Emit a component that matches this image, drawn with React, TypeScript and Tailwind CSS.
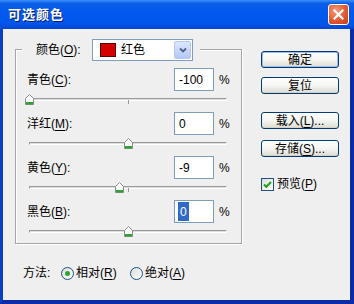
import React from "react";

const FONT = '"Liberation Sans","Noto Sans CJK SC",sans-serif';

function Acc({ k }: { k: string }) {
  return (
    <>
      (<span className="underline underline-offset-[2px]">{k}</span>)
    </>
  );
}

function Slider({ value, last }: { value: number; last?: boolean }) {
  const c = ((value + 100) / 200) * 198;
  return (
    <div className={`relative ml-[2px] w-[198px] pt-[7px] ${last ? "h-[20px]" : "h-[21px]"}`}>
      <div className="h-[3px] border-t border-t-[#9a9a9a] border-l border-l-[#9a9a9a] border-b border-b-white border-r border-r-white bg-[#dedede]" />
      <div className="absolute left-[99px] top-[9px] h-[4px] w-px bg-[#9a9a9a]" />
      <svg
        className="absolute top-[3px]"
        style={{ left: c - 4.5 }}
        width="9"
        height="11"
        viewBox="0 0 9 11"
      >
        <path d="M4.5 0.5 L8.5 4.5 L8.5 10.5 L0.5 10.5 L0.5 4.5 Z" fill="#fcfcfc" stroke="#8c8c8c" />
        <rect x="1" y="8" width="7" height="2.5" fill="#2fa33a" />
      </svg>
    </div>
  );
}

function Row({ label, k, value, selected, last }: { label: string; k: string; value: number; selected?: boolean; last?: boolean }) {
  return (
    <div>
      <div className="flex h-[23px] items-center">
        <div className="w-[147px] shrink-0">
          {label}
          <Acc k={k} />:
        </div>
        <div className="flex h-[23px] w-[40px] items-center border border-[#7f9db9] bg-white pl-[3px]">
          {selected ? (
            <span className="flex h-[19px] items-center bg-[#316ac5] px-[2px] text-white">{value}</span>
          ) : (
            <span className="pl-[1px]">{value}</span>
          )}
        </div>
        <div className="ml-[5px]">%</div>
      </div>
      <Slider value={value} last={last} />
    </div>
  );
}

function XPButton({ children, def }: { children: React.ReactNode; def?: boolean }) {
  return (
    <div
      className={`flex h-[17px] w-[78px] items-center justify-center rounded-[3px] border border-[#003c74] bg-gradient-to-b from-white via-[#f5f5f2] to-[#dcdcd4] leading-none ${
        def ? "shadow-[inset_0_0_0_1px_#9dbdf0]" : "shadow-[inset_0_-1px_0_#d6d0c5]"
      }`}
    >
      {children}
    </div>
  );
}

function Radio({ on }: { on?: boolean }) {
  return (
    <svg width="13" height="13" viewBox="0 0 13 13">
      <defs>
        <linearGradient id="rg" x1="0" y1="0" x2="1" y2="1">
          <stop offset="0" stopColor="#dcdcd6" />
          <stop offset="1" stopColor="#ffffff" />
        </linearGradient>
      </defs>
      <circle cx="6.5" cy="6.5" r="6" fill="url(#rg)" stroke="#1c5180" />
      {on && <circle cx="6.5" cy="6.5" r="2.5" fill="#2fa33a" />}
    </svg>
  );
}

export default function App() {
  return (
    <div
      className="flex h-[304px] w-[354px] flex-col overflow-hidden text-[12px] text-black"
      style={{ fontFamily: FONT }}
    >
      {/* title bar */}
      <div className="flex h-[29px] shrink-0 items-center justify-between bg-[linear-gradient(to_bottom,#3d8ffb_0%,#0a5fe6_12%,#0058ee_45%,#0056ea_80%,#0046d4_100%)] pl-[8px] pr-[5px]">
        <div className="text-[13px] font-bold tracking-[1px] text-white [text-shadow:1px_1px_0_#0a1e6e]">
          可选颜色
        </div>
        <div className="flex h-[21px] w-[21px] items-center justify-center rounded-[3px] border border-white bg-[radial-gradient(circle_at_35%_30%,#f39a7a,#e1552b_60%,#c23f1b)]">
          <svg width="11" height="11" viewBox="0 0 11 11">
            <path d="M1.5 1.5 L9.5 9.5 M9.5 1.5 L1.5 9.5" stroke="#fff" strokeWidth="2.2" strokeLinecap="square" />
          </svg>
        </div>
      </div>

      {/* body */}
      <div className="flex flex-1 border-b-[4px] border-l-[3px] border-r-[4px] border-b-[#0c2ba6] border-l-[#0a3fc2] border-r-[#0c2ba6] bg-[#efefef]">
        {/* left column */}
        <div className="w-[239px] shrink-0 pl-[12px] pt-[10px]">
          {/* legend row */}
          <div className="flex h-[22px] w-[227px]">
            <div className="h-[12px] w-[7px] self-end border-l border-t border-[#a5a5a5] shadow-[inset_1px_1px_0_#ffffff]" />
            <div className="ml-[14px] flex w-[56px] items-center">
              颜色
              <Acc k="O" />:
            </div>
            <div className="flex h-[22px] w-[101px] items-center border border-[#7f9db9] bg-white pl-[7px] pr-[1px]">
              <div className="h-[14px] w-[16px] border border-[#5a0000] bg-[#d40000]" />
              <div className="ml-[5px] flex-1">红色</div>
              <div className="flex h-[18px] w-[17px] items-center justify-center rounded-[2px] border border-[#b4c8f6] bg-gradient-to-b from-[#dce7fd] to-[#b3c8f6]">
                <svg width="8" height="6" viewBox="0 0 8 6">
                  <path d="M1 1.5 L4 4.5 L7 1.5" fill="none" stroke="#4d6185" strokeWidth="1.8" />
                </svg>
              </div>
            </div>
            <div className="ml-[7px] h-[12px] flex-1 self-end border-r border-t border-[#a5a5a5] shadow-[inset_0_1px_0_#ffffff,1px_0_0_#ffffff]" />
          </div>
          {/* group box body */}
          <div className="w-[227px] border-b border-l border-r border-[#a5a5a5] pl-[11px] pt-[7px] shadow-[inset_1px_0_0_#ffffff,1px_1px_0_#ffffff]">
            <Row label="青色" k="C" value={-100} />
            <Row label="洋红" k="M" value={0} />
            <Row label="黄色" k="Y" value={-9} />
            <Row label="黑色" k="B" value={0} selected last />
          </div>
          {/* method row */}
          <div className="ml-[8px] mt-[18px] flex h-[22px] items-center">
            <div className="w-[38px]">方法:</div>
            <Radio on />
            <div className="ml-[2px] w-[54px]">
              相对<Acc k="R" />
            </div>
            <Radio />
            <div className="ml-[2px]">
              绝对<Acc k="A" />
            </div>
          </div>
        </div>

        {/* right column */}
        <div className="flex flex-col pl-[19px] pt-[22px]">
          <XPButton def>确定</XPButton>
          <div className="mt-[9px]">
            <XPButton>复位</XPButton>
          </div>
          <div className="mt-[18px]">
            <XPButton>
              载入<Acc k="L" />...
            </XPButton>
          </div>
          <div className="mt-[11px]">
            <XPButton>
              存储<Acc k="S" />...
            </XPButton>
          </div>
          <div className="mt-[18px] flex items-center">
            <svg width="13" height="13" viewBox="0 0 13 13">
              <defs>
                <linearGradient id="cg" x1="0" y1="0" x2="1" y2="1">
                  <stop offset="0" stopColor="#dcdcd6" />
                  <stop offset="1" stopColor="#ffffff" />
                </linearGradient>
              </defs>
              <rect x="0.5" y="0.5" width="12" height="12" fill="url(#cg)" stroke="#1c5180" />
              <path d="M3 6.5 L5.3 8.8 L10 4" fill="none" stroke="#21a121" strokeWidth="2" />
            </svg>
            <div className="ml-[3px]">
              预览<Acc k="P" />
            </div>
          </div>
        </div>
      </div>
    </div>
  );
}
